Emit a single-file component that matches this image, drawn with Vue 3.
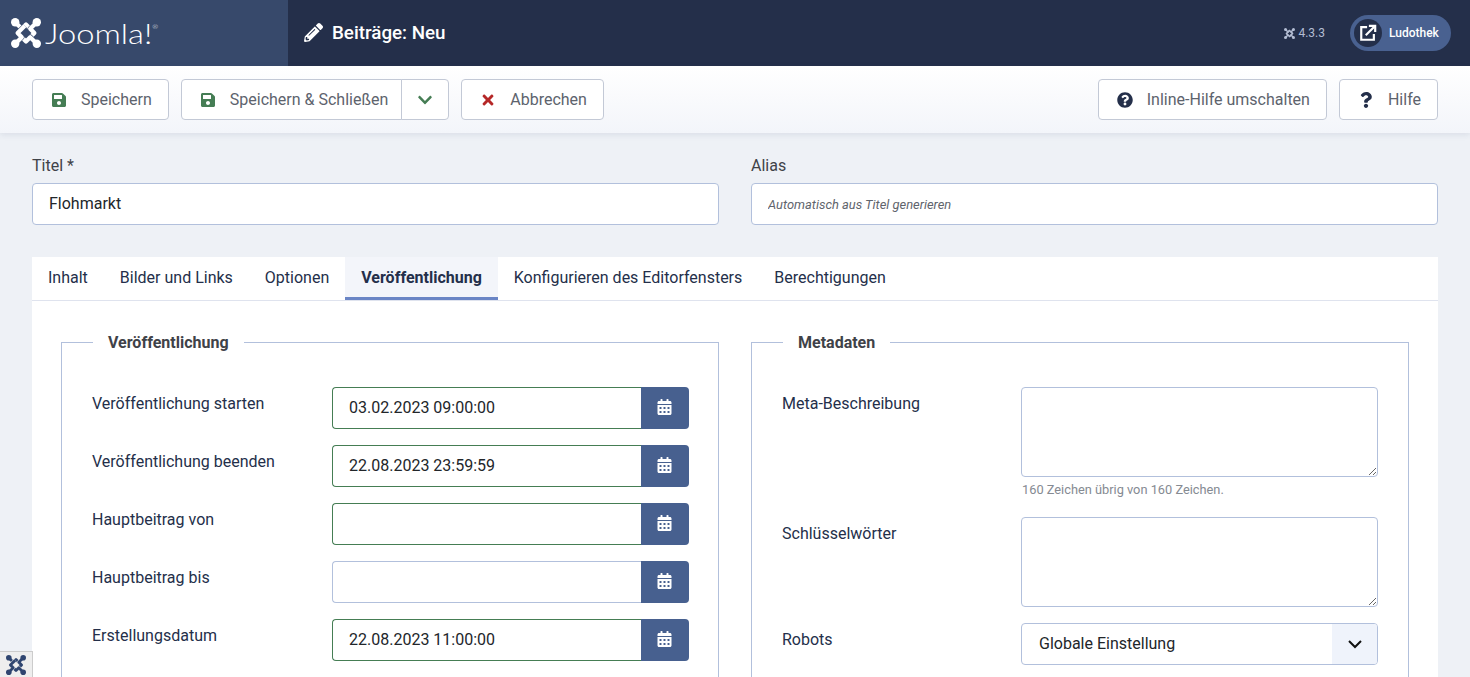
<template>
  <div class="page">
    <header class="topbar">
      <div class="brand">
        <svg class="jlogo" viewBox="0 0 100 100">
          <g v-for="r in arms" :key="r" :transform="`rotate(${r} 50 50)`">
            <path :d="armPath" fill="none" stroke="#37496b" stroke-width="18" stroke-linejoin="round" />
            <path :d="armPath" fill="none" stroke="#fff" stroke-width="14" stroke-linejoin="round" />
            <circle cx="14" cy="14" r="14" fill="#fff" />
          </g>
        </svg>
        <span class="wordmark">Joomla!<sup>®</sup></span>
      </div>
      <div class="page-title">
        <svg class="pencil" viewBox="0 0 512 512"><path :d="icons.pencil" /></svg>
        <h1>Beiträge: Neu</h1>
      </div>
      <div class="version">
        <svg class="jlogo-small" viewBox="0 0 100 100">
          <g v-for="r in arms" :key="r" :transform="`rotate(${r} 50 50)`">
            <path :d="armPath" fill="none" stroke="#b3bdd3" stroke-width="14" stroke-linejoin="round" />
            <circle cx="14" cy="14" r="14" fill="#b3bdd3" />
          </g>
        </svg>
        4.3.3
      </div>
      <div class="user-pill">
        <span class="user-icon">
          <svg viewBox="0 0 20 20" fill="none" stroke="#fff" stroke-width="2.4">
            <path d="M9 3.5H2.5V17.5H16.500V11" />
            <path d="M7.500 12.500L17 3" />
            <path d="M11 2H18V9" />
          </svg>
        </span>
        <span>Ludothek</span>
      </div>
    </header>

    <div class="toolbar">
      <button class="btn">
        <svg class="ico green" viewBox="0 0 448 512"><path :d="icons.save" /></svg>Speichern
      </button>
      <div class="btn-group">
        <button class="btn">
          <svg class="ico green" viewBox="0 0 448 512"><path :d="icons.save" /></svg>Speichern &amp; Schließen
        </button>
        <button class="btn caret">
          <svg class="ico green" viewBox="0 0 448 512"><path :d="icons.chevron" /></svg>
        </button>
      </div>
      <button class="btn">
        <svg class="ico red" viewBox="0 0 352 512"><path :d="icons.times" /></svg>Abbrechen
      </button>
      <span class="spacer"></span>
      <button class="btn">
        <svg class="ico navy round" viewBox="0 0 512 512"><path :d="icons.circleQ" /></svg>Inline-Hilfe umschalten
      </button>
      <button class="btn">
        <svg class="ico navy" viewBox="0 0 384 512"><path :d="icons.question" /></svg>Hilfe
      </button>
    </div>

    <main class="content">
      <div class="title-row">
        <div>
          <label class="top-label">Titel *</label>
          <input class="text-input" type="text" value="Flohmarkt" />
        </div>
        <div>
          <label class="top-label">Alias</label>
          <input class="text-input alias" type="text" placeholder="Automatisch aus Titel generieren" />
        </div>
      </div>

      <section class="card">
        <nav class="tabs">
          <button
            v-for="tab in tabs"
            :key="tab"
            class="tab"
            :class="{ active: tab === activeTab }"
            @click="activeTab = tab"
          >{{ tab }}</button>
        </nav>

        <div class="panel">
          <fieldset class="group">
            <legend>Veröffentlichung</legend>
            <div class="fields">
              <template v-for="d in dates" :key="d.label">
                <label class="field-label">{{ d.label }}</label>
                <div class="date-field">
                  <input class="date-input" :class="{ valid: d.valid }" type="text" :value="d.value" />
                  <button class="cal-btn">
                    <svg viewBox="0 0 448 512"><path :d="icons.calendar" /></svg>
                  </button>
                </div>
              </template>
            </div>
          </fieldset>

          <fieldset class="group">
            <legend>Metadaten</legend>
            <div class="fields meta">
              <label class="field-label">Meta-Beschreibung</label>
              <div>
                <textarea class="area"></textarea>
                <small class="hint">160 Zeichen übrig von 160 Zeichen.</small>
              </div>
              <label class="field-label">Schlüsselwörter</label>
              <textarea class="area"></textarea>
              <label class="field-label">Robots</label>
              <div class="select">
                <span>Globale Einstellung</span>
                <span class="select-arrow">
                  <svg viewBox="0 0 16 16" fill="none" stroke="#111" stroke-width="2"><path d="M2 5l6 6 6-6" /></svg>
                </span>
              </div>
            </div>
          </fieldset>
        </div>
      </section>
    </main>

    <div class="debug-tab">
      <svg viewBox="0 0 100 100">
        <g v-for="r in arms" :key="r" :transform="`rotate(${r} 50 50)`">
          <path :d="armPath" fill="none" stroke="#eee" stroke-width="18" stroke-linejoin="round" />
          <path :d="armPath" fill="none" stroke="#2f4570" stroke-width="14" stroke-linejoin="round" />
          <circle cx="14" cy="14" r="14" fill="#2f4570" />
        </g>
      </svg>
    </div>
  </div>
</template>

<script setup>
import { ref } from 'vue';

// the logo is one arm drawn four times, turned around the centre
const arms = [0, 90, 180, 270];
const armPath = 'M14 14L36 36L50 22L74 46';

const tabs = [
  'Inhalt',
  'Bilder und Links',
  'Optionen',
  'Veröffentlichung',
  'Konfigurieren des Editorfensters',
  'Berechtigungen',
];
const activeTab = ref('Veröffentlichung');

const dates = [
  { label: 'Veröffentlichung starten', value: '03.02.2023 09:00:00', valid: true },
  { label: 'Veröffentlichung beenden', value: '22.08.2023 23:59:59', valid: true },
  { label: 'Hauptbeitrag von', value: '', valid: true },
  { label: 'Hauptbeitrag bis', value: '', valid: false },
  { label: 'Erstellungsdatum', value: '22.08.2023 11:00:00', valid: true },
];

const icons = {
  save: 'M433.941 129.941l-83.882-83.882A48 48 0 0 0 316.118 32H48C21.49 32 0 53.49 0 80v352c0 26.51 21.49 48 48 48h352c26.51 0 48-21.49 48-48V163.882a48 48 0 0 0-14.059-33.941zM224 416c-35.346 0-64-28.654-64-64 0-35.346 28.654-64 64-64s64 28.654 64 64c0 35.346-28.654 64-64 64zm96-304.52V212c0 6.627-5.373 12-12 12H76c-6.627 0-12-5.373-12-12V108c0-6.627 5.373-12 12-12h228.52c3.183 0 6.235 1.264 8.485 3.515l3.48 3.48A11.996 11.996 0 0 1 320 111.48z',
  pencil: 'M497.9 142.1l-46.1 46.1c-4.7 4.7-12.3 4.7-17 0l-111-111c-4.7-4.7-4.7-12.3 0-17l46.1-46.1c18.7-18.7 49.1-18.7 67.9 0l60.1 60.1c18.8 18.7 18.8 49.1 0 67.9zM284.2 99.8L21.6 362.4.4 483.9c-2.9 16.4 11.4 30.6 27.8 27.8l121.5-21.3 262.6-262.6c4.7-4.7 4.7-12.3 0-17l-111-111c-4.8-4.7-12.4-4.7-17.1 0zM124.1 339.9c-5.5-5.5-5.5-14.3 0-19.8l154-154c5.5-5.5 14.3-5.5 19.8 0s5.5 14.3 0 19.8l-154 154c-5.5 5.5-14.3 5.5-19.8 0zM88 424h48v36.3l-64.5 11.3-31.1-31.1L51.7 376H88v48z',
  chevron: 'M207.029 381.476L12.686 187.132c-9.373-9.373-9.373-24.569 0-33.941l22.667-22.667c9.357-9.357 24.522-9.375 33.901-.04L224 284.505l154.745-154.021c9.379-9.335 24.544-9.317 33.901.04l22.667 22.667c9.373 9.373 9.373 24.569 0 33.941L240.971 381.476c-9.373 9.372-24.569 9.372-33.942 0z',
  times: 'M242.72 256l100.07-100.07c12.28-12.28 12.28-32.19 0-44.48l-22.24-22.24c-12.28-12.28-32.19-12.28-44.48 0L176 189.28 75.93 89.21c-12.28-12.28-32.19-12.28-44.48 0L9.21 111.45c-12.28 12.28-12.28 32.19 0 44.48L109.28 256 9.21 356.07c-12.28 12.28-12.28 32.19 0 44.48l22.24 22.24c12.28 12.28 32.2 12.28 44.48 0L176 322.72l100.07 100.07c12.28 12.28 32.2 12.28 44.48 0l22.24-22.24c12.28-12.28 12.28-32.19 0-44.48L242.72 256z',
  circleQ: 'M504 256c0 136.997-111.043 248-248 248S8 392.997 8 256C8 119.083 119.043 8 256 8s248 111.083 248 248zM262.655 90c-54.497 0-89.255 22.957-116.549 63.758-3.536 5.286-2.353 12.415 2.715 16.258l34.699 26.31c5.205 3.947 12.621 3.008 16.665-2.122 17.864-22.658 30.113-35.797 57.303-35.797 20.429 0 45.698 13.148 45.698 32.958 0 14.976-12.363 22.667-32.534 33.976C247.128 238.528 216 254.941 216 296v4c0 6.627 5.373 12 12 12h56c6.627 0 12-5.373 12-12v-1.333c0-28.462 83.186-29.647 83.186-106.667 0-58.002-60.165-102-116.531-102zM256 338c-25.365 0-46 20.635-46 46 0 25.364 20.635 46 46 46s46-20.636 46-46c0-25.365-20.635-46-46-46z',
  question: 'M202.021 0C122.202 0 70.503 32.703 29.914 91.026c-7.363 10.58-5.093 25.086 5.178 32.874l43.138 32.709c10.373 7.865 25.132 6.026 33.253-4.148 25.049-31.381 43.63-49.449 82.757-49.449 30.764 0 68.816 19.799 68.816 49.631 0 22.552-18.617 34.134-48.993 51.164-35.423 19.86-82.299 44.576-82.299 106.405V320c0 13.255 10.745 24 24 24h72.471c13.255 0 24-10.745 24-24v-5.773c0-42.86 125.268-44.645 125.268-160.627C377.504 66.256 286.902 0 202.021 0zM192 373.459c-38.196 0-69.271 31.075-69.271 69.271 0 38.195 31.075 69.27 69.271 69.27s69.271-31.075 69.271-69.271-31.075-69.27-69.271-69.27z',
  calendar: 'M0 464c0 26.5 21.5 48 48 48h352c26.5 0 48-21.5 48-48V192H0v272zm320-196c0-6.6 5.4-12 12-12h40c6.6 0 12 5.4 12 12v40c0 6.6-5.4 12-12 12h-40c-6.6 0-12-5.4-12-12v-40zm0 128c0-6.6 5.4-12 12-12h40c6.6 0 12 5.4 12 12v40c0 6.6-5.4 12-12 12h-40c-6.6 0-12-5.4-12-12v-40zM192 268c0-6.6 5.4-12 12-12h40c6.6 0 12 5.4 12 12v40c0 6.6-5.4 12-12 12h-40c-6.6 0-12-5.4-12-12v-40zm0 128c0-6.6 5.4-12 12-12h40c6.6 0 12 5.4 12 12v40c0 6.6-5.4 12-12 12h-40c-6.6 0-12-5.4-12-12v-40zM64 268c0-6.6 5.4-12 12-12h40c6.6 0 12 5.4 12 12v40c0 6.6-5.4 12-12 12H76c-6.6 0-12-5.4-12-12v-40zm0 128c0-6.6 5.4-12 12-12h40c6.6 0 12 5.4 12 12v40c0 6.6-5.4 12-12 12H76c-6.6 0-12-5.4-12-12v-40zM400 64h-48V16c0-8.8-7.2-16-16-16h-32c-8.8 0-16 7.2-16 16v48H160V16c0-8.8-7.2-16-16-16h-32c-8.8 0-16 7.2-16 16v48H48C21.5 64 0 85.5 0 112v48h448v-48c0-26.5-21.5-48-48-48z',
};
</script>

<style scoped>
.page {
  height: 100vh;
  overflow: hidden;
  background: #eef1f6;
  font-family: Roboto, sans-serif;
  font-size: 16px;
  color: #22262a;
}

.topbar {
  display: flex;
  align-items: center;
  height: 66px;
  background: #242f4a;
  color: #fff;
}

.brand {
  display: flex;
  align-items: center;
  width: 288px;
  height: 100%;
  padding-left: 11px;
  box-sizing: border-box;
  background: #37496b;
}

.jlogo {
  width: 30px;
  height: 30px;
}

.wordmark {
  margin-left: 4px;
  font-family: Lato, sans-serif;
  font-weight: 300;
  font-size: 28px;
  line-height: 1;
  transform: scaleX(1.17);
  transform-origin: left center;
}

.wordmark sup {
  font-size: 6px;
  vertical-align: 15px;
  line-height: 0;
}

.page-title {
  display: flex;
  align-items: center;
  padding-left: 16px;
  flex: 1;
}

.pencil {
  width: 19px;
  height: 19px;
  fill: #fff;
  margin-right: 9px;
}

.page-title h1 {
  margin: 0;
  font-size: 18.8px;
  font-weight: 500;
  line-height: 1.2;
}

.version {
  display: flex;
  align-items: center;
  font-size: 12px;
  color: #b3bdd3;
  margin-right: 25px;
}

.jlogo-small {
  width: 11px;
  height: 11px;
  margin-right: 3px;
}

.user-pill {
  display: flex;
  align-items: center;
  width: 101px;
  height: 36px;
  margin-right: 19px;
  padding-left: 4px;
  box-sizing: border-box;
  border-radius: 18px;
  background: #496190;
  font-size: 12px;
  font-weight: 500;
}

.user-icon {
  display: flex;
  align-items: center;
  justify-content: center;
  width: 28px;
  height: 28px;
  margin-right: 7px;
  border-radius: 50%;
  background: #242f4a;
}

.user-icon svg {
  width: 18px;
  height: 18px;
}

.toolbar {
  position: relative;
  display: flex;
  align-items: center;
  gap: 12px;
  height: 67px;
  padding: 0 32px;
  box-sizing: border-box;
  background: linear-gradient(#fff, #f3f5fa);
  box-shadow: 0 2px 6px rgba(52, 71, 112, 0.1);
}

.spacer {
  flex: 1;
}

.btn {
  display: flex;
  align-items: center;
  height: 41px;
  padding: 0 16px 0 19px;
  background: #fff;
  border: 1px solid #c3c9d6;
  border-radius: 4px;
  font: inherit;
  color: #5d636d;
  cursor: pointer;
}

.btn-group {
  display: flex;
}

.btn-group .btn:first-child {
  border-radius: 4px 0 0 4px;
  padding-right: 13px;
}

.btn.caret {
  margin-left: -1px;
  padding: 0 15px;
  border-radius: 0 4px 4px 0;
}

.caret .ico {
  margin: 0;
  width: 16px;
}

.ico {
  width: 14px;
  height: 16px;
  margin-right: 15px;
}

.ico.round {
  width: 16px;
  margin-left: -1px;
  margin-right: 14px;
}

.green {
  fill: #457d54;
}

.red {
  fill: #b52727;
}

.navy {
  fill: #242f4a;
}

.content {
  padding: 20px 32px 0;
}

.title-row {
  display: grid;
  grid-template-columns: 687px 687px;
  justify-content: space-between;
  margin-bottom: 32px;
}

.top-label {
  display: block;
  margin-bottom: 5px;
  padding-top: 1px;
  line-height: 24px;
  color: #3f4248;
}

.text-input {
  display: block;
  width: 100%;
  height: 42px;
  padding: 0 16px 2px;
  box-sizing: border-box;
  border: 1px solid #b2c0dc;
  border-radius: 4px;
  background: #fff;
  font: inherit;
  color: #22262a;
}

.alias::placeholder {
  font-size: 12.9px;
  font-style: italic;
  color: #5f646c;
  opacity: 1;
}

.card {
  background: #fff;
}

.tabs {
  display: flex;
  height: 44px;
  box-sizing: border-box;
  border-bottom: 1px solid #dfe3ee;
}

.tab {
  height: 43px;
  padding: 0 16px;
  background: none;
  border: 0;
  border-bottom: 3px solid transparent;
  font: inherit;
  color: #242f4a;
  cursor: pointer;
}

.tab.active {
  background: #f3f5fa;
  border-bottom-color: #6a85c5;
  font-weight: 700;
}

.panel {
  display: grid;
  grid-template-columns: 658px 658px;
  justify-content: space-between;
  padding: 29px 29px 40px;
}

.group {
  margin: 0;
  min-width: 0;
  padding: 0 29px 40px 30px;
  border: 1px solid #b2c0dc;
}

.group legend {
  margin-left: 1px;
  padding: 1px 15px 0;
  font-weight: 700;
  line-height: 24px;
  color: #3f4248;
}

.fields {
  display: grid;
  grid-template-columns: 240px 1fr;
  row-gap: 16px;
  padding-top: 32px;
}

.meta {
  grid-template-columns: 239px 1fr;
  margin-right: 1px;
}

.field-label {
  padding-top: 5px;
  line-height: 24px;
  color: #242f4a;
}

.date-field {
  display: flex;
  height: 42px;
}

.date-input {
  flex: 1;
  min-width: 0;
  padding: 0 16px 2px;
  box-sizing: border-box;
  border: 1px solid #b2c0dc;
  border-right: 0;
  border-radius: 4px 0 0 4px;
  font: inherit;
  color: #22262a;
}

.date-input.valid {
  border-color: #457d54;
}

.cal-btn {
  display: flex;
  align-items: center;
  justify-content: center;
  width: 48px;
  padding: 0 1px 2px 0;
  background: #47608f;
  border: 0;
  border-radius: 0 4px 4px 0;
  cursor: pointer;
}

.cal-btn svg {
  width: 15px;
  height: 16px;
  fill: #fff;
}

.area {
  display: block;
  width: 100%;
  height: 90px;
  box-sizing: border-box;
  border: 1px solid #b2c0dc;
  border-radius: 4px;
  font: inherit;
}

.hint {
  display: block;
  height: 24px;
  padding-left: 1px;
  font-size: 12.8px;
  line-height: 26px;
  color: #858a92;
}

.select {
  display: flex;
  align-items: center;
  justify-content: space-between;
  height: 42px;
  padding-left: 17px;
  box-sizing: border-box;
  border: 1px solid #b2c0dc;
  border-radius: 4px;
  overflow: hidden;
  color: #22262a;
}

.select > span:first-child {
  margin-top: -2px;
}

.select-arrow {
  display: flex;
  align-items: center;
  justify-content: center;
  width: 45px;
  height: 100%;
  background: #eff3fb;
}

.select-arrow svg {
  width: 16px;
  height: 16px;
}

.debug-tab {
  position: fixed;
  left: 0;
  bottom: 0;
  display: flex;
  align-items: center;
  justify-content: center;
  width: 33px;
  height: 26px;
  box-sizing: border-box;
  background: #eee;
  border-top: 1px solid #ccc;
  border-right: 1px solid #ccc;
}

.debug-tab svg {
  width: 20px;
  height: 20px;
}
</style>

<style>
html,
body {
  margin: 0;
  overflow: hidden;
}
</style>
